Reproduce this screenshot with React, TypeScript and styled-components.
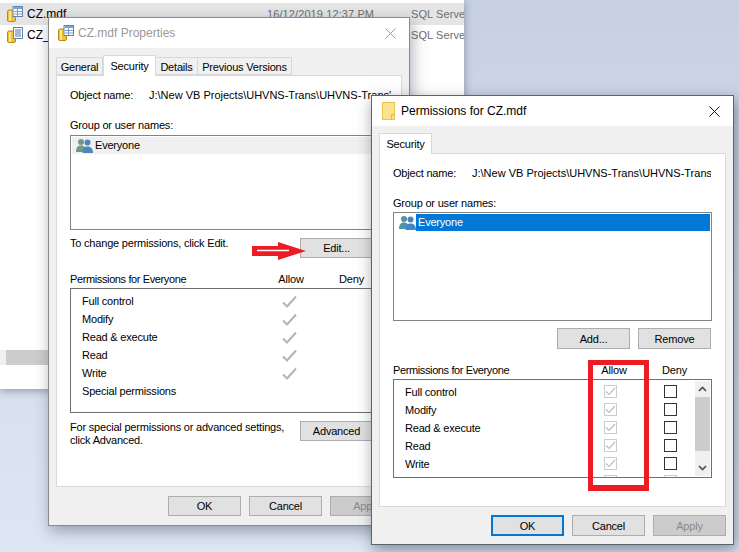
import React from "react";
import styled, { createGlobalStyle } from "styled-components";

const Global = createGlobalStyle`
  html, body { margin: 0; padding: 0; background: #dbe4f1; }
  body { font-family: "Liberation Sans", Arial, sans-serif; font-size: 11px; letter-spacing: -0.2px; color: #000; }
`;

const Desktop = styled.div`
  position: relative;
  width: 739px;
  height: 552px;
  overflow: hidden;
  background: linear-gradient(180deg, #c6d0e1 0%, #d3dcea 45%, #dde6f2 100%);
`;

const Explorer = styled.div`
  position: absolute;
  left: 0;
  top: 0;
  width: 464px;
  height: 389px;
  background: #fff;
  padding-top: 3px;
  box-sizing: border-box;
  display: flex;
  flex-direction: column;
  box-shadow: 0 2px 8px rgba(60, 70, 90, 0.45);
`;

const FileRow = styled.div<{ $selected?: boolean }>`
  height: 21.5px;
  flex: none;
  display: grid;
  grid-template-columns: 27px 240px 144px 1fr;
  align-items: center;
  background: ${(p) => (p.$selected ? "#e5e5e5" : "transparent")};
  white-space: nowrap;
  overflow: hidden;
`;

const FileIconCell = styled.div`
  display: flex;
  padding-left: 7px;
`;

const FileName = styled.span`
  font-size: 12px;
  letter-spacing: 0;
`;

const Muted = styled.span`
  color: #6d6d6d;
  letter-spacing: 0.1px;
`;

const HScroll = styled.div`
  margin-top: 304px;
  height: 15px;
  width: 100%;
  background: #f0f0f0;
  display: flex;
  padding-left: 6px;
  box-sizing: border-box;
`;

const HThumb = styled.div`
  width: 60px;
  background: #cdcdcd;
`;

const Dialog = styled.div<{ $x: number; $y: number; $w: number; $h: number; $dark?: boolean }>`
  position: absolute;
  left: ${(p) => p.$x}px;
  top: ${(p) => p.$y}px;
  width: ${(p) => p.$w}px;
  height: ${(p) => p.$h}px;
  box-sizing: border-box;
  background: #f0f0f0;
  border: 1px solid ${(p) => (p.$dark ? "#5f6368" : "#8a8a8a")};
  display: flex;
  flex-direction: column;
  box-shadow: 2px 5px 14px rgba(40, 50, 70, ${(p) => (p.$dark ? 0.5 : 0.4)});
`;

const TitleBar = styled.div<{ $inactive?: boolean; $pad: number }>`
  height: 30px;
  flex: none;
  background: #fff;
  display: flex;
  align-items: center;
  padding-left: ${(p) => p.$pad}px;
  gap: ${(p) => (p.$inactive ? 4 : 6)}px;
  font-size: 12px;
  letter-spacing: 0;
  color: ${(p) => (p.$inactive ? "#999" : "#000")};
`;

const CloseIcon = styled.svg`
  margin-left: auto;
  margin-right: 13px;
`;

const TabStrip = styled.div`
  flex: none;
  height: 20px;
  margin-top: 7px;
  padding-left: 7px;
  display: flex;
  align-items: flex-end;
  position: relative;
  z-index: 1;
`;

const Tab = styled.div<{ $active?: boolean; $w: number }>`
  width: ${(p) => p.$w}px;
  box-sizing: border-box;
  height: ${(p) => (p.$active ? 21 : 18)}px;
  padding-top: ${(p) => (p.$active ? 0 : 2)}px;
  margin-bottom: ${(p) => (p.$active ? -1 : 0)}px;
  background: ${(p) => (p.$active ? "#fff" : "#f0f0f0")};
  border: 1px solid #d9d9d9;
  border-bottom: ${(p) => (p.$active ? "none" : "1px solid #d9d9d9")};
  border-left: ${(p) => (p.$active ? "1px solid #d9d9d9" : "none")};
  display: flex;
  align-items: center;
  justify-content: center;
  white-space: nowrap;
  &:first-child { border-left: 1px solid #d9d9d9; }
`;

const Panel = styled.div<{ $h: number; $w: number }>`
  flex: none;
  width: ${(p) => p.$w}px;
  height: ${(p) => p.$h}px;
  margin-left: 7px;
  box-sizing: border-box;
  background: #fff;
  border: 1px solid #d9d9d9;
  padding-left: 13px;
`;

const ObjectRow = styled.div<{ $w: number }>`
  margin-top: 11px;
  height: 16px;
  width: ${(p) => p.$w}px;
  display: grid;
  grid-template-columns: 79px 1fr;
  align-items: center;
  white-space: nowrap;
  overflow: hidden;
`;

const Clip = styled.div`
  overflow: hidden;
  letter-spacing: 0;
`;

const GroupLabel = styled.div`
  margin-top: 14px;
  height: 16px;
  line-height: 16px;
`;

const NamesBox = styled.div<{ $h: number; $top: number }>`
  margin-top: ${(p) => p.$top}px;
  height: ${(p) => p.$h}px;
  width: 319px;
  box-sizing: border-box;
  border: 1px solid #828282;
  background: #fff;
  padding: 1px;
`;

const NameRow = styled.div<{ $tone: "plain" | "selected" }>`
  height: 17px;
  display: flex;
  align-items: center;
  background: ${(p) => (p.$tone === "plain" ? "#f0f0f0" : "transparent")};
`;

const NameIconCell = styled.div`
  width: 21px;
  flex: none;
  padding-left: 4px;
  box-sizing: border-box;
  display: flex;
`;

const NameText = styled.div<{ $selected?: boolean }>`
  flex: 1;
  height: 100%;
  line-height: 17px;
  padding-left: 2px;
  background: ${(p) => (p.$selected ? "#0078d7" : "transparent")};
  color: ${(p) => (p.$selected ? "#fff" : "#000")};
`;

const Button = styled.div<{ $kind?: "default" | "disabled"; $h?: number }>`
  width: 73px;
  height: ${(p) => p.$h ?? 21}px;
  flex: none;
  box-sizing: border-box;
  display: flex;
  align-items: center;
  justify-content: center;
  background: ${(p) => (p.$kind === "disabled" ? "#cccccc" : "#e1e1e1")};
  color: ${(p) => (p.$kind === "disabled" ? "#8a8a8a" : "#000")};
  border: ${(p) => (p.$kind === "default" ? "2px solid #0078d7" : "1px solid #adadad")};
`;

const NoteRow = styled.div`
  width: 303px;
  display: flex;
  justify-content: space-between;
  align-items: flex-start;
`;

const Note = styled.div`
  line-height: 13px;
  white-space: nowrap;
`;

const NoteSlot = styled.div<{ $top: number }>`
  margin-top: ${(p) => p.$top}px;
`;

const ActionRow = styled.div`
  margin-top: 7px;
  width: 318px;
  display: flex;
  justify-content: flex-end;
  gap: 8px;
`;

const PermHeader = styled.div`
  height: 16px;
  margin-top: 13px;
  display: grid;
  grid-template-columns: 191px 60px 61px;
  align-items: center;
  white-space: nowrap;
`;

const PermTitle = styled.span`
  letter-spacing: -0.38px;
`;

const HeaderCell = styled.div`
  text-align: center;
`;

const PermBox = styled.div<{ $h: number; $w: number }>`
  margin-top: 1px;
  height: ${(p) => p.$h}px;
  width: ${(p) => p.$w}px;
  box-sizing: border-box;
  border: 1px solid #6f6f6f;
  background: #fff;
  display: flex;
  overflow: hidden;
`;

const PermRows = styled.div`
  flex: 1;
  padding: 3px 0 0 11px;
`;

const PermRow = styled.div<{ $cols: string }>`
  height: 18px;
  display: grid;
  grid-template-columns: ${(p) => p.$cols};
  align-items: center;
  white-space: nowrap;
`;

const CheckBox = styled.div<{ $disabled?: boolean }>`
  width: 13px;
  height: 13px;
  margin-top: -1px;
  box-sizing: border-box;
  border: 1px solid ${(p) => (p.$disabled ? "#cccccc" : "#333")};
  background: #fff;
  display: flex;
  align-items: center;
  justify-content: center;
`;

const Scrollbar = styled.div`
  width: 15px;
  margin: 1px 1px 1px 0;
  flex: none;
  background: #f0f0f0;
  display: flex;
  flex-direction: column;
`;

const ScrollArrow = styled.div`
  height: 16px;
  flex: none;
  display: flex;
  align-items: center;
  justify-content: center;
`;

const ScrollThumb = styled.div`
  height: 54px;
  flex: none;
  background: #cdcdcd;
`;

const ScrollGap = styled.div`
  flex: 1;
`;

const Footer = styled.div<{ $top: number; $right: number }>`
  margin-top: ${(p) => p.$top}px;
  padding-right: ${(p) => p.$right}px;
  display: flex;
  justify-content: flex-end;
  gap: 8px;
`;

const RedFrame = styled.div`
  position: absolute;
  left: 588px;
  top: 360px;
  width: 61px;
  height: 131px;
  box-sizing: border-box;
  border: 5px solid #ed1c24;
  border-bottom-width: 6px;
`;

const ArrowMark = styled.svg`
  position: absolute;
  left: 251px;
  top: 241px;
`;

const TableFileIcon = ({ size = 16 }: { size?: number }) => (
  <svg width={size} height={size} viewBox="0 0 16 16">
    <rect x="0.5" y="4" width="8" height="11.5" rx="1.5" fill="#f2c230" stroke="#b98a14" />
    <rect x="2" y="5" width="2" height="10" fill="#fbe38a" />
    <rect x="6" y="0.5" width="9.5" height="10" fill="#fff" stroke="#5d86b8" />
    <rect x="6.5" y="1" width="8.5" height="2" fill="#7ba4d4" />
    <path d="M7 5.5h8M7 8h8M10.5 3v7" stroke="#7c9cc4" strokeWidth="1" />
  </svg>
);

const ListFileIcon = () => (
  <svg width="16" height="16" viewBox="0 0 16 16">
    <rect x="0.5" y="4" width="8" height="11.5" rx="1.5" fill="#f2c230" stroke="#b98a14" />
    <rect x="2" y="5" width="2" height="10" fill="#fbe38a" />
    <rect x="6.5" y="0.5" width="9" height="11" fill="#fff" stroke="#5d86b8" />
    <path d="M8 3h6M8 5h6M8 7h6M8 9h6" stroke="#4e76a8" strokeWidth="1" />
  </svg>
);

const FolderIcon = () => (
  <svg width="13" height="18" viewBox="0 0 13 18">
    <rect x="0.5" y="0.5" width="12" height="17" fill="#fde28c" stroke="#e8c350" />
    <path d="M9.5 17.5v-5h3" fill="#fbd878" stroke="#e3bb48" />
  </svg>
);

const PeopleIcon = ({ back, front }: { back: string; front: string }) => (
  <svg width="17" height="15" viewBox="0 0 17 15">
    <circle cx="5" cy="4" r="3" fill={back} />
    <path d="M0 14c0-5 2-6.500 5-6.500s5 1.500 5 6.500z" fill={back} />
    <circle cx="11.500" cy="4.500" r="3" fill={front} />
    <path d="M6.500 15c0-5 2-6.500 5-6.500s5.500 1.500 5.500 6.500z" fill={front} />
  </svg>
);

const Close = ({ color }: { color: string }) => (
  <CloseIcon width="11" height="11" viewBox="0 0 11 11">
    <path d="M0.500 0.500l10 10M10.500 0.500l-10 10" stroke={color} strokeWidth="1" />
  </CloseIcon>
);

const GreyCheck = () => (
  <svg width="15" height="13" viewBox="0 0 15 13">
    <path d="M1 7.500l4 4L14 1.500" fill="none" stroke="#b4b4b4" strokeWidth="2" />
  </svg>
);

const SmallCheck = () => (
  <svg width="11" height="9" viewBox="0 0 11 9">
    <path d="M1 4.500l3 3L10 1" fill="none" stroke="#bdbdbd" strokeWidth="1.200" />
  </svg>
);

const Chevron = ({ up }: { up?: boolean }) => (
  <svg width="9" height="6" viewBox="0 0 9 6">
    <path d={up ? "M1 5l3.500-3.500L8 5" : "M1 1l3.500 3.500L8 1"} fill="none" stroke="#505050" strokeWidth="1.700" />
  </svg>
);

const perms = ["Full control", "Modify", "Read & execute", "Read", "Write"];

export default function App() {
  return (
    <Desktop>
      <Global />
      <Explorer>
        <FileRow $selected>
          <FileIconCell><TableFileIcon /></FileIconCell>
          <FileName>CZ.mdf</FileName>
          <Muted>16/12/2019 12:37 PM</Muted>
          <Muted>SQL Serve</Muted>
        </FileRow>
        <FileRow>
          <FileIconCell><ListFileIcon /></FileIconCell>
          <FileName>CZ_log.ldf</FileName>
          <Muted />
          <Muted>SQL Serve</Muted>
        </FileRow>
        <HScroll><HThumb /></HScroll>
      </Explorer>

      <Dialog $x={48} $y={17} $w={362} $h={509}>
        <TitleBar $inactive $pad={9}>
          <TableFileIcon />
          <span>CZ.mdf Properties</span>
          <Close color="#999" />
        </TitleBar>
        <TabStrip>
          <Tab $w={47}>General</Tab>
          <Tab $w={53} $active>Security</Tab>
          <Tab $w={42}>Details</Tab>
          <Tab $w={94}>Previous Versions</Tab>
        </TabStrip>
        <Panel $w={346} $h={412}>
          <ObjectRow $w={326}>
            <span>Object name:</span>
            <Clip>J:\New VB Projects\UHVNS-Trans\UHVNS-Trans'</Clip>
          </ObjectRow>
          <GroupLabel>Group or user names:</GroupLabel>
          <NamesBox $top={2} $h={95}>
            <NameRow $tone="plain">
              <NameIconCell><PeopleIcon back="#6f9b84" front="#4d86b8" /></NameIconCell>
              <NameText>Everyone</NameText>
            </NameRow>
          </NamesBox>
          <NoteRow>
            <NoteSlot $top={7}><Note>To change permissions, click Edit.</Note></NoteSlot>
            <NoteSlot $top={8}><Button $h={20}>Edit...</Button></NoteSlot>
          </NoteRow>
          <PermHeader>
            <PermTitle>Permissions for Everyone</PermTitle>
            <HeaderCell>Allow</HeaderCell>
            <HeaderCell>Deny</HeaderCell>
          </PermHeader>
          <PermBox $w={318} $h={125}>
            <PermRows>
              {[...perms, "Special permissions"].map((name, i) => (
                <PermRow key={name} $cols="200px 15px">
                  <span>{name}</span>
                  {i < 5 ? <GreyCheck /> : null}
                </PermRow>
              ))}
            </PermRows>
          </PermBox>
          <NoteRow>
            <NoteSlot $top={8}>
              <Note>
                For special permissions or advanced settings,
                <br />
                click Advanced.
              </Note>
            </NoteSlot>
            <NoteSlot $top={8}><Button $h={20}>Advanced</Button></NoteSlot>
          </NoteRow>
        </Panel>
        <Footer $top={9} $right={6}>
          <Button $h={20}>OK</Button>
          <Button $h={20}>Cancel</Button>
          <Button $h={20} $kind="disabled">Apply</Button>
        </Footer>
      </Dialog>

      <Dialog $x={371} $y={95} $w={363} $h={450} $dark>
        <TitleBar $pad={10}>
          <FolderIcon />
          <span>Permissions for CZ.mdf</span>
          <Close color="#111" />
        </TitleBar>
        <TabStrip>
          <Tab $w={53} $active>Security</Tab>
        </TabStrip>
        <Panel $w={347} $h={354}>
          <ObjectRow $w={318}>
            <span>Object name:</span>
            <Clip>J:\New VB Projects\UHVNS-Trans\UHVNS-Trans'</Clip>
          </ObjectRow>
          <GroupLabel>Group or user names:</GroupLabel>
          <NamesBox $top={1} $h={109}>
            <NameRow $tone="selected">
              <NameIconCell><PeopleIcon back="#4f93a8" front="#3f86c8" /></NameIconCell>
              <NameText $selected>Everyone</NameText>
            </NameRow>
          </NamesBox>
          <ActionRow>
            <Button>Add...</Button>
            <Button>Remove</Button>
          </ActionRow>
          <PermHeader>
            <PermTitle>Permissions for Everyone</PermTitle>
            <HeaderCell>Allow</HeaderCell>
            <HeaderCell>Deny</HeaderCell>
          </PermHeader>
          <PermBox $w={319} $h={99}>
            <PermRows>
              {[...perms, ""].map((name, i) => (
                <PermRow key={i} $cols="199px 13px 47px 13px">
                  <span>{name}</span>
                  <CheckBox $disabled>{i < 5 ? <SmallCheck /> : null}</CheckBox>
                  <span />
                  <CheckBox $disabled={i === 5} />
                </PermRow>
              ))}
            </PermRows>
            <Scrollbar>
              <ScrollArrow><Chevron up /></ScrollArrow>
              <ScrollThumb />
              <ScrollGap />
              <ScrollArrow><Chevron /></ScrollArrow>
            </Scrollbar>
          </PermBox>
        </Panel>
        <Footer $top={8} $right={7}>
          <Button $kind="default">OK</Button>
          <Button>Cancel</Button>
          <Button $kind="disabled">Apply</Button>
        </Footer>
      </Dialog>

      <ArrowMark width="56" height="20" viewBox="0 0 56 20">
        <path d="M1 5h26V1l28 9-28 9v-4H1z" fill="#ed1c24" />
        <path d="M6 9.500h32" stroke="#fff" strokeWidth="1.500" />
      </ArrowMark>
      <RedFrame />
    </Desktop>
  );
}
